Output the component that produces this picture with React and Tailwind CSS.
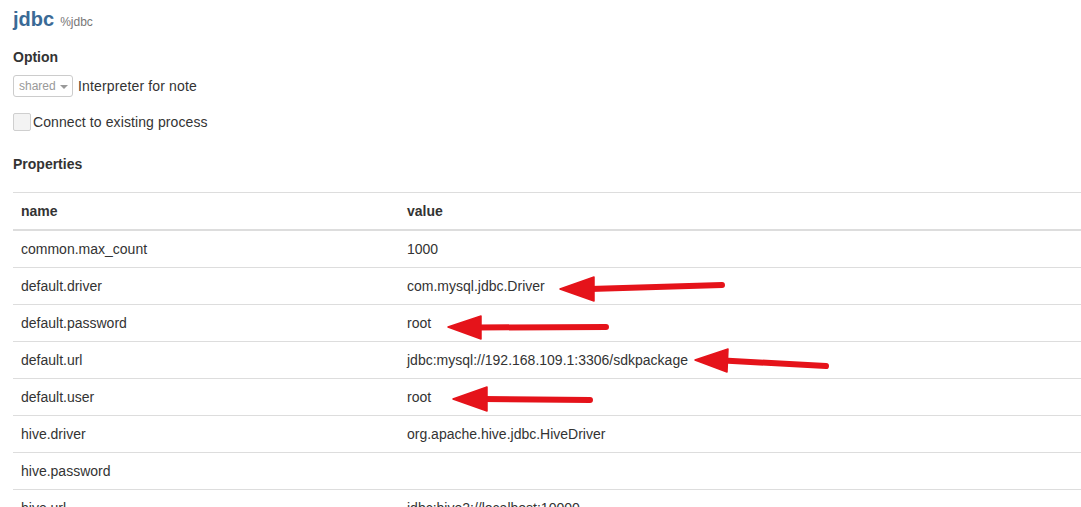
import React from "react";

const rows = [
  ["common.max_count", "1000"],
  ["default.driver", "com.mysql.jdbc.Driver"],
  ["default.password", "root"],
  ["default.url", "jdbc:mysql://192.168.109.1:3306/sdkpackage"],
  ["default.user", "root"],
  ["hive.driver", "org.apache.hive.jdbc.HiveDriver"],
  ["hive.password", ""],
  ["hive.url", "jdbc:hive2://localhost:10000"],
];

const arrows = [
  { tip: [560, 289], b1: [594, 277], b2: [594, 301], tail: [722, 285] },
  { tip: [448, 327], b1: [481, 316], b2: [481, 339], tail: [606, 327] },
  { tip: [695, 360], b1: [728, 349], b2: [727, 372], tail: [826, 366] },
  { tip: [453, 399], b1: [487, 387], b2: [487, 411], tail: [590, 400] },
];

function Arrows() {
  return (
    <svg
      className="absolute left-0 top-0 pointer-events-none"
      width="1081"
      height="507"
      viewBox="0 0 1081 507"
    >
      {arrows.map((a, i) => {
        const mx = (a.b1[0] + a.b2[0]) / 2 - 4;
        const my = (a.b1[1] + a.b2[1]) / 2;
        return (
          <g key={i} fill="#e5131a" stroke="#e5131a">
            <line
              x1={mx}
              y1={my}
              x2={a.tail[0]}
              y2={a.tail[1]}
              strokeWidth="6"
              strokeLinecap="round"
            />
            <polygon
              points={`${a.tip[0]},${a.tip[1]} ${a.b1[0]},${a.b1[1]} ${a.b2[0]},${a.b2[1]}`}
              strokeWidth="1.5"
              strokeLinejoin="round"
            />
          </g>
        );
      })}
    </svg>
  );
}

export default function App() {
  return (
    <div className="relative w-[1081px] h-[507px] overflow-hidden bg-white text-[#333] font-['Liberation_Sans',Arial,sans-serif]">
      <div className="pl-[13px]">
        <div className="pt-[7px] h-[31px] flex items-baseline gap-[6px] leading-[24px]">
          <span className="text-[20px] font-bold text-[#3a6a96]">jdbc</span>
          <span className="text-[12px] text-[#777]">%jdbc</span>
        </div>

        <div className="mt-[16px] h-[20px] text-[14px] leading-[20px] font-bold">
          Option
        </div>

        <div className="mt-[8px] h-[22px] flex items-center gap-[5px]">
          <div className="w-[60px] h-[22px] border border-[#ccc] rounded-[3px] flex items-center pl-[5px] gap-[4px] text-[12px] text-[#999]">
            <span>shared</span>
            <span className="w-0 h-0 border-l-[4px] border-r-[4px] border-t-[4px] border-l-transparent border-r-transparent border-t-[#999] mt-[1px]"></span>
          </div>
          <span className="text-[14px] leading-[20px] tracking-[0.15px]">Interpreter for note</span>
        </div>

        <div className="mt-[16px] h-[18px] flex items-center gap-[2px]">
          <div className="w-[18px] h-[18px] border border-[#cfcfcf] rounded-[2px] bg-[#f3f3f3]"></div>
          <span className="text-[14px] leading-[20px] tracking-[0.1px]">Connect to existing process</span>
        </div>

        <div className="mt-[23px] h-[20px] text-[14px] leading-[20px] font-bold">
          Properties
        </div>

        <table className="mt-[18px] w-full">
          <thead>
            <tr>
              <th className="w-[386px] text-left font-bold text-[14px] leading-[20px] px-[8px] py-[8px] border-t border-b-2 border-[#ddd]">
                name
              </th>
              <th className="text-left font-bold text-[14px] leading-[20px] px-[8px] py-[8px] border-t border-b-2 border-[#ddd]">
                value
              </th>
            </tr>
          </thead>
          <tbody>
            {rows.map(([n, v]) => (
              <tr key={n}>
                <td className="text-[14px] leading-[20px] px-[8px] py-[8px] border-t border-[#ddd]">
                  {n}
                </td>
                <td className="text-[14px] leading-[20px] px-[8px] py-[8px] border-t border-[#ddd]">
                  {v}
                </td>
              </tr>
            ))}
          </tbody>
        </table>
      </div>
      <Arrows />
    </div>
  );
}
